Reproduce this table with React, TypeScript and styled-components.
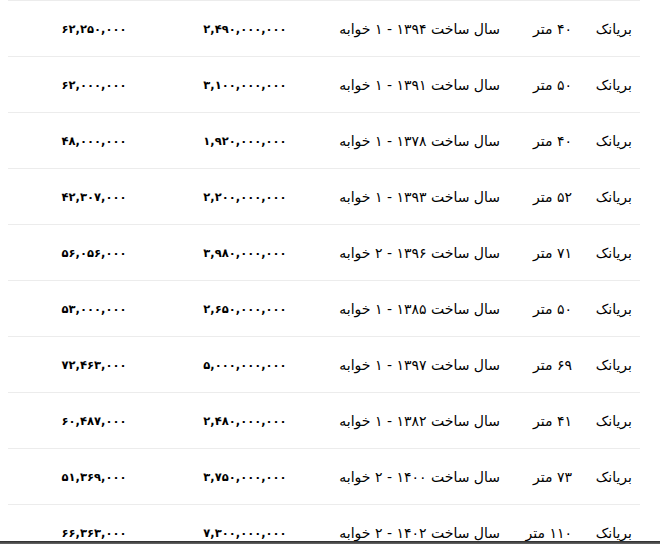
import React from "react";
import styled, { createGlobalStyle } from "styled-components";

const Global = createGlobalStyle`
  html, body { margin: 0; padding: 0; background: #fff; }
  body { padding: 0 8px; font-family: "DejaVu Sans", Tahoma, sans-serif; color: #000; }
`;

const Table = styled.div`
  width: 632px;
  direction: rtl;
  display: flex;
  flex-direction: column;
`;

const Row = styled.div`
  display: grid;
  grid-template-columns: 60px 72px 198px 130px 172px;
  height: 56px;
  border-top: 1px solid #ececec;
  box-sizing: border-box;
  align-items: center;
`;

const TextCell = styled.div`
  padding-right: 8px;
  font-size: 14px;
  text-align: right;
  white-space: nowrap;
`;

const NumCell = styled.div`
  font-size: 11.5px;
  font-weight: bold;
  text-align: center;
  white-space: nowrap;
`;

const BottomEdge = styled.div`
  position: fixed;
  left: 0;
  right: 0;
  bottom: 0;
  height: 3px;
  background: linear-gradient(to bottom, #2a2a2a, #6a6a6a);
`;

const fa = (s: string) => s.replace(/\d/g, (d) => "۰۱۲۳۴۵۶۷۸۹"[+d]);

const rows = [
  ["40", "1394", "1", "2,490,000,000", "62,250,000"],
  ["50", "1391", "1", "3,100,000,000", "62,000,000"],
  ["40", "1378", "1", "1,920,000,000", "48,000,000"],
  ["52", "1393", "1", "2,200,000,000", "42,307,000"],
  ["71", "1396", "2", "3,980,000,000", "56,056,000"],
  ["50", "1385", "1", "2,650,000,000", "53,000,000"],
  ["69", "1397", "1", "5,000,000,000", "72,463,000"],
  ["41", "1382", "1", "2,480,000,000", "60,487,000"],
  ["73", "1400", "2", "3,750,000,000", "51,369,000"],
  ["110", "1402", "2", "7,300,000,000", "66,363,000"],
];

export default function App() {
  return (
    <>
      <Global />
      <Table>
        {rows.map((r, i) => (
          <Row key={i}>
            <TextCell>بریانک</TextCell>
            <TextCell>{fa(r[0])} متر</TextCell>
            <TextCell>
              سال ساخت {fa(r[1])} - {fa(r[2])} خوابه
            </TextCell>
            <NumCell>{fa(r[3])}</NumCell>
            <NumCell>{fa(r[4])}</NumCell>
          </Row>
        ))}
      </Table>
      <BottomEdge />
    </>
  );
}
